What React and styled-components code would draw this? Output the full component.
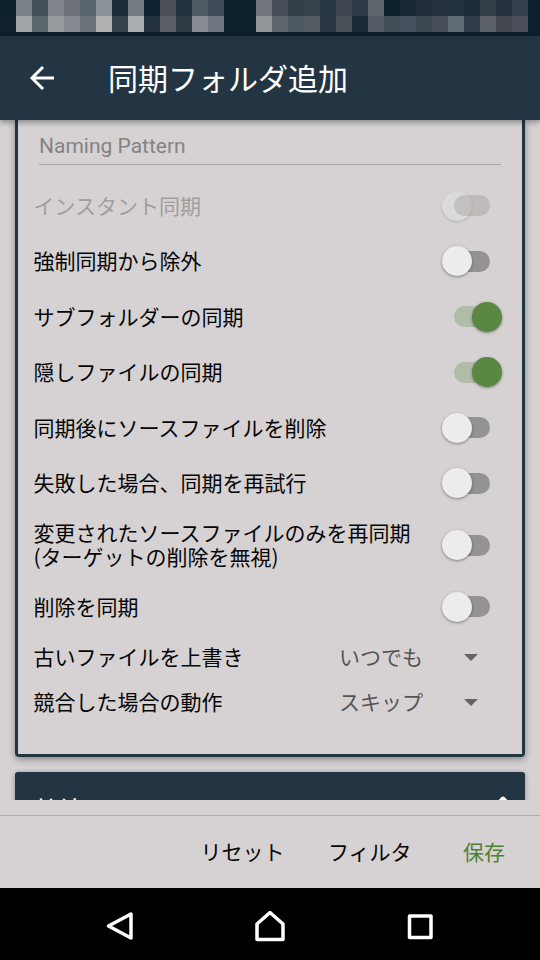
import React, { useState } from 'react';
import styled, { createGlobalStyle } from 'styled-components';

const statusCells = [
  [
    '#0c202e', '#788088', '#445059', '#80858e', '#6d727a', '#59646d', '#8c9299', '#1b2b38', '#737b83',
    '#0f2433', '#4a4f58', '#24313f', '#4f5b64', '#404a57', '#0c202e', '#0c202e', '#73767d', '#475059',
    '#333f48', '#38434c', '#283641', '#40464f', '#2d3a46', '#5e656d', '#0c202e', '#162735', '#212d3b',
    '#25323d', '#243240', '#1c2c3a', '#333f49', '#26333e', '#34404c',
  ],
  [
    '#102230', '#a3a6a8', '#5c676c', '#98999e', '#868992', '#6b7279', '#b0b0b1', '#35434a', '#a9adb0',
    '#25323f', '#5c5c65', '#2c3a44', '#888b94', '#6f7780', '#0c202e', '#0c202e', '#949598', '#5f666e',
    '#4d5760', '#545b63', '#2a3742', '#4a5058', '#1a2936', '#535b66', '#434d55', '#465260', '#3d474f',
    '#454e57', '#606b73', '#2f3c47', '#5d6268', '#42464f', '#4b505a',
  ],
];

const options = [
  { label: 'インスタント同期', disabled: true },
  { label: '強制同期から除外' },
  { label: 'サブフォルダーの同期', on: true },
  { label: '隠しファイルの同期', on: true },
  { label: '同期後にソースファイルを削除' },
  { label: '失敗した場合、同期を再試行' },
  { label: '変更されたソースファイルのみを再同期\n(ターゲットの削除を無視)', tall: true },
  { label: '削除を同期' },
];

const selects = [
  { label: '古いファイルを上書き', value: 'いつでも' },
  { label: '競合した場合の動作', value: 'スキップ' },
];

const App = () => {
  const [checked, setChecked] = useState(options.map((option) => !!option.on));

  const toggle = (index) => {
    setChecked(checked.map((value, i) => (i === index ? !value : value)));
  };

  return (
    <Screen>
      <GlobalStyle />
      <StatusBar>
        {statusCells.map((row, i) => (
          <StatusRow key={i}>
            {row.map((color, j) => (
              <StatusCell key={j} $color={color} />
            ))}
          </StatusRow>
        ))}
      </StatusBar>

      <Toolbar>
        <BackIcon viewBox="0 0 26 26">
          <path d="M25 13H3M14 2L3 13l11 11" />
        </BackIcon>
        <Title>同期フォルダ追加</Title>
      </Toolbar>

      <Content>
        <Card>
          <NamingField>Naming Pattern</NamingField>
          {options.map((option, index) => (
            <OptionRow key={option.label} $tall={option.tall}>
              <Label $disabled={option.disabled}>{option.label}</Label>
              <Switch
                type="button"
                disabled={option.disabled}
                onClick={() => toggle(index)}
              >
                <Track $on={checked[index]} $disabled={option.disabled} />
                <Thumb $on={checked[index]} $disabled={option.disabled} />
              </Switch>
            </OptionRow>
          ))}
          {selects.map((select) => (
            <SelectRow key={select.label}>
              <Label>{select.label}</Label>
              <SelectValue>{select.value}</SelectValue>
              <Caret viewBox="0 0 14 7">
                <path d="M0 0h14L7 7z" />
              </Caret>
            </SelectRow>
          ))}
        </Card>

        <SectionHeader>
          <SectionTitle>接続</SectionTitle>
          <ChevronIcon viewBox="0 0 18 12">
            <path d="M2 10.500l7-7 7 7" />
          </ChevronIcon>
        </SectionHeader>
      </Content>

      <Actions>
        <ActionButton>リセット</ActionButton>
        <ActionButton>フィルタ</ActionButton>
        <ActionButton $primary>保存</ActionButton>
      </Actions>

      <NavBar>
        <NavIcon viewBox="0 0 36 36">
          <path d="M29 6v24L6.5 18z" />
        </NavIcon>
        <NavIcon viewBox="0 0 36 36">
          <path d="M18 4.5L31 16v15.500H5V16z" />
        </NavIcon>
        <NavIcon viewBox="0 0 36 36">
          <path d="M7.500 8h21.500v21.500H7.500z" />
        </NavIcon>
      </NavBar>
    </Screen>
  );
};

// Styled components
const GlobalStyle = createGlobalStyle`
  * {
    box-sizing: border-box;
  }

  body {
    margin: 0;
    background: #000;
    font-family: 'Noto Sans CJK JP', sans-serif;
  }
`;

const Screen = styled.div`
  display: flex;
  flex-direction: column;
  width: 540px;
  height: 960px;
  overflow: hidden;
  background: #d6d2d3;
`;

const StatusBar = styled.div`
  flex: none;
  height: 36px;
  background: #0c202e;
`;

const StatusRow = styled.div`
  display: flex;
  height: 16px;
`;

const StatusCell = styled.div`
  width: 16px;
  background: ${({ $color }) => $color};
`;

const Toolbar = styled.header`
  display: flex;
  flex: none;
  align-items: center;
  height: 84px;
  padding-left: 29px;
  background: #233543;
  box-shadow: 0 2px 6px rgba(0, 0, 0, 0.4);
  z-index: 1;
`;

const BackIcon = styled.svg`
  width: 26px;
  height: 26px;
  fill: none;
  stroke: #fff;
  stroke-width: 3;
`;

const Title = styled.h1`
  margin: 0 0 0 53px;
  padding-bottom: 2px;
  color: #fff;
  font-size: 30px;
  font-weight: 400;
  line-height: 44px;
`;

const Content = styled.main`
  flex: none;
  height: 680px;
  padding: 0 15px;
  overflow: hidden;
`;

const Card = styled.section`
  height: 637px;
  padding: 0 20px 0 15.5px;
  border: 3px solid #203742;
  border-top: 0;
  border-radius: 0 0 4px 4px;
  box-shadow: 0 2px 7px rgba(30, 25, 40, 0.45);
`;

const NamingField = styled.div`
  height: 45px;
  margin: 0 1px 13px 5.5px;
  padding-top: 11px;
  border-bottom: 1px solid #aaa6a9;
  color: #858283;
  font-family: Roboto, sans-serif;
  font-size: 21px;
  line-height: 30px;
`;

const OptionRow = styled.div`
  display: flex;
  align-items: center;
  justify-content: space-between;
  height: ${({ $tall }) => ($tall ? '68px' : '55.5px')};
`;

const Label = styled.span`
  padding-bottom: 2px;
  color: ${({ $disabled }) => ($disabled ? '#a19d9f' : '#050505')};
  font-size: 21px;
  line-height: 24.5px;
  white-space: pre;
`;

const Switch = styled.button`
  position: relative;
  flex: none;
  width: 60px;
  height: 30px;
  padding: 0;
  border: 0;
  background: none;
`;

const Track = styled.span`
  position: absolute;
  top: 4.5px;
  left: 12px;
  z-index: ${({ $disabled }) => ($disabled ? 1 : 0)};
  width: 36px;
  height: 21px;
  border-radius: 11px;
  background: ${({ $on, $disabled }) => {
    if ($disabled) return 'rgba(150, 145, 143, 0.35)';
    return $on ? '#b1bda9' : '#959293';
  }};
`;

const Thumb = styled.span`
  position: absolute;
  top: 0;
  left: ${({ $on }) => ($on ? '30px' : '0')};
  width: 30px;
  height: 30px;
  border-radius: 50%;
  background: ${({ $on, $disabled }) => {
    if ($disabled) return '#dcd9d9';
    return $on ? '#5a8742' : '#ececec';
  }};
  box-shadow: 0 1px 3px rgba(0, 0, 0, ${({ $disabled }) => ($disabled ? 0.16 : 0.4)});
`;

const SelectRow = styled.div`
  display: grid;
  grid-template-columns: 305.5px 125px 14px;
  align-items: center;
  height: 45px;
`;

const SelectValue = styled.span`
  padding-bottom: 2px;
  color: #555253;
  font-size: 21px;
  line-height: 24.5px;
`;

const Caret = styled.svg`
  width: 14px;
  height: 7px;
  fill: #666364;
`;

const SectionHeader = styled.section`
  display: flex;
  align-items: flex-start;
  justify-content: space-between;
  height: 60px;
  margin-top: 15px;
  padding: 19px 13px 0 21px;
  border-radius: 3px 3px 0 0;
  background: #233543;
  box-shadow: 0 1px 5px rgba(30, 25, 40, 0.4);
`;

const SectionTitle = styled.h2`
  margin: 0;
  color: #fff;
  font-size: 23px;
  font-weight: 500;
  line-height: 34px;
`;

const ChevronIcon = styled.svg`
  width: 18px;
  height: 12px;
  margin-top: 4px;
  fill: none;
  stroke: #fff;
  stroke-width: 4;
  stroke-linejoin: round;
`;

const Actions = styled.footer`
  display: flex;
  flex: none;
  align-items: center;
  justify-content: flex-end;
  gap: 43.5px;
  height: 73px;
  margin-top: 15px;
  padding: 0 35px 2px 0;
  border-top: 1px solid #b1adae;
`;

const ActionButton = styled.button`
  padding: 0;
  border: 0;
  background: none;
  color: ${({ $primary }) => ($primary ? '#4f8134' : '#050505')};
  font-family: inherit;
  font-size: 21px;
  line-height: 30px;

  &:last-child {
    margin-left: 8px;
  }
`;

const NavBar = styled.nav`
  display: flex;
  flex: none;
  align-items: center;
  justify-content: center;
  gap: 114px;
  height: 72px;
  padding-top: 4px;
  background: #000;
`;

const NavIcon = styled.svg`
  width: 36px;
  height: 36px;
  fill: none;
  stroke: #fff;
  stroke-width: 3.5;
  stroke-linejoin: round;
`;

export default App;
